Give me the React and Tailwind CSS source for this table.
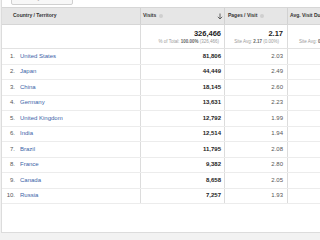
import React from 'react';

const rows = [
    ['1.', 'United States', '81,806', '2.03'],
    ['2.', 'Japan', '44,449', '2.49'],
    ['3.', 'China', '18,145', '2.60'],
    ['4.', 'Germany', '13,631', '2.23'],
    ['5.', 'United Kingdom', '12,792', '1.99'],
    ['6.', 'India', '12,514', '1.94'],
    ['7.', 'Brazil', '11,795', '2.08'],
    ['8.', 'France', '9,382', '2.80'],
    ['9.', 'Canada', '8,658', '2.05'],
    ['10.', 'Russia', '7,257', '1.93'],
];

const App = () => {
    return (
        <div className="w-[320px] h-[240px] overflow-hidden bg-[#f2f2f2] font-['Liberation_Sans',Arial,sans-serif]">
            <div className="h-[233px] ml-px bg-white border-l border-b border-[#dcdcdc] overflow-hidden">
                {/* secondary dimension button, clipped by the top edge */}
                <div className="h-[7px] relative">
                    <div className="absolute left-[9px] top-[-10px] w-[62px] h-[15px] border border-[#d0d0d0] rounded-[2px] bg-[#f7f7f7] text-[5px] text-[#888] flex items-end pl-[4px] pb-[2px]">
                        Secondary dimension
                    </div>
                </div>

                {/* header */}
                <div className="flex h-[18px] bg-[#e6e6e6] border-t border-b border-[#d6d6d6] text-[5px] font-bold text-[#333] whitespace-nowrap">
                    <div className="w-[139px] shrink-0 border-r border-[#d2d2d2] flex items-center pl-[11px]">Country / Territory</div>
                    <div className="w-[84px] shrink-0 border-r border-[#d2d2d2] flex items-center pl-[2px] pr-[1px]">
                        <span>Visits</span>
                        <span className="ml-[3px] w-[4px] h-[4px] rounded-full bg-[#cfcfcf]"></span>
                        <svg className="ml-auto" width="6" height="7" viewBox="0 0 6 7">
                            <path d="M3 0.5 V6 M0.8 3.8 L3 6 L5.2 3.8" stroke="#555" strokeWidth="0.9" fill="none" />
                        </svg>
                    </div>
                    <div className="w-[63px] shrink-0 border-r border-[#d2d2d2] flex items-center pl-[3px]">
                        <span>Pages / Visit</span>
                        <span className="ml-[3px] w-[4px] h-[4px] rounded-full bg-[#cfcfcf]"></span>
                    </div>
                    <div className="flex-1 flex items-center pl-[2px] overflow-hidden">Avg. Visit Duration</div>
                </div>

                {/* totals */}
                <div className="flex h-[24px] border-b border-[#e2e2e2] whitespace-nowrap">
                    <div className="w-[139px] shrink-0 border-r border-[#dcdcdc]"></div>
                    <div className="w-[84px] shrink-0 border-r border-[#dcdcdc] flex flex-col items-end justify-center pr-[3px] pt-[1px]">
                        <div className="text-[7.5px] font-bold text-[#222] leading-[9px]">326,466</div>
                        <div className="text-[4.5px] text-[#9a9a9a] leading-[8px] pr-[2px]">
                            % of Total: <span className="font-bold text-[#666]">100.00%</span> (326,466)
                        </div>
                    </div>
                    <div className="w-[63px] shrink-0 border-r border-[#dcdcdc] flex flex-col items-end justify-center pr-[4px] pt-[1px]">
                        <div className="text-[7.5px] font-bold text-[#222] leading-[9px]">2.17</div>
                        <div className="text-[4.5px] text-[#9a9a9a] leading-[8px] pr-[4px]">
                            Site Avg: <span className="font-bold text-[#666]">2.17</span> (0.00%)
                        </div>
                    </div>
                    <div className="flex-1 flex flex-col justify-center pl-[11px] pt-[10px] overflow-hidden">
                        <div className="text-[4.5px] text-[#9a9a9a] leading-[8px]">
                            Site Avg: <span className="font-bold text-[#666]">00:05:23</span> (0.00%)
                        </div>
                    </div>
                </div>

                {/* data rows */}
                {rows.map(([n, country, visits, pages]) => (
                    <div key={country} className="flex h-[15.5px] border-b border-[#ececec] text-[6px] whitespace-nowrap">
                        <div className="w-[139px] shrink-0 border-r border-[#dcdcdc] flex items-center">
                            <span className="w-[13px] text-right text-[#555]">{n}</span>
                            <span className="ml-[5px] text-[#3a63a8]">{country}</span>
                        </div>
                        <div className="w-[84px] shrink-0 border-r border-[#dcdcdc] flex items-center justify-end pr-[3px] font-bold text-[#222]">
                            {visits}
                        </div>
                        <div className="w-[63px] shrink-0 border-r border-[#dcdcdc] flex items-center justify-end pr-[4px] text-[#555]">
                            {pages}
                        </div>
                        <div className="flex-1"></div>
                    </div>
                ))}
            </div>
        </div>
    );
};

export default App;
